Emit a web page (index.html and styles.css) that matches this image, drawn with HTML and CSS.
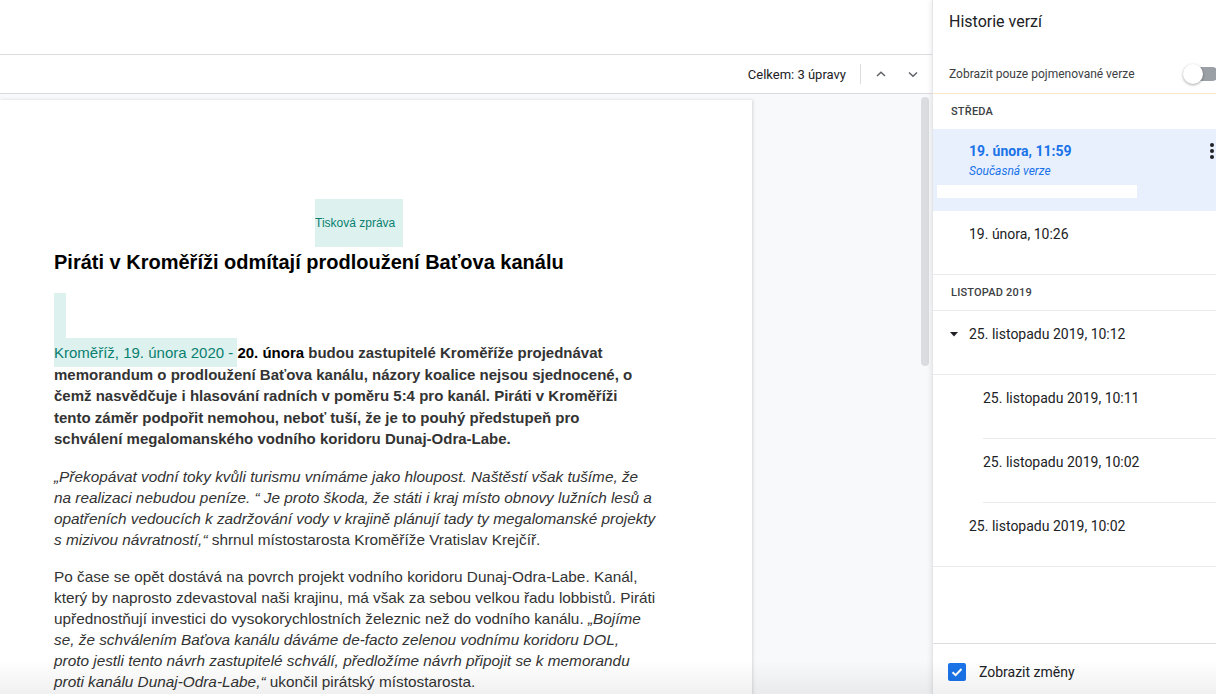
FILE: index.html
```html
<!DOCTYPE html>
<html lang="cs">
<head>
<meta charset="utf-8">
<title>Historie verzí</title>
<link rel="stylesheet" href="styles.css">
</head>
<body>
<div class="app">
  <div class="main">
    <div class="topbar"></div>
    <div class="toolbar">
      <span class="total">Celkem: 3 úpravy</span>
      <span class="divider"></span>
      <button class="nav" aria-label="Předchozí">
        <svg width="12" height="12" viewBox="0 0 12 12"><path d="M2 8 L6 4.2 L10 8" fill="none" stroke="#5f6368" stroke-width="1.5"/></svg>
      </button>
      <button class="nav" aria-label="Další">
        <svg width="12" height="12" viewBox="0 0 12 12"><path d="M2 4.5 L6 8.3 L10 4.5" fill="none" stroke="#5f6368" stroke-width="1.5"/></svg>
      </button>
    </div>
    <div class="canvas">
      <div class="page">
        <div class="tag">Tisková zpráva</div>
        <h1>Piráti v Kroměříži odmítají prodloužení Baťova kanálu</h1>
        <div class="mark"></div>
        <p class="lead"><span class="hl">Kroměříž, 19. února 2020 - </span><span class="black">20. února</span> budou zastupitelé Kroměříže projednávat<br>memorandum o prodloužení Baťova kanálu, názory koalice nejsou sjednocené, o<br>čemž nasvědčuje i hlasování radních v poměru 5:4 pro kanál. Piráti v Kroměříži<br>tento záměr podpořit nemohou, neboť tuší, že je to pouhý předstupeň pro<br>schválení megalomanského vodního koridoru Dunaj-Odra-Labe.</p>
        <p class="para quote"><i>„Překopávat vodní toky kvůli turismu vnímáme jako hloupost. Naštěstí však tušíme, že<br>na realizaci nebudou peníze. “ Je proto škoda, že státi i kraj místo obnovy lužních lesů a<br>opatřeních vedoucích k zadržování vody v krajině plánují tady ty megalomanské projekty<br>s mizivou návratností,“</i> shrnul místostarosta Kroměříže Vratislav Krejčíř.</p>
        <p class="para last">Po čase se opět dostává na povrch projekt vodního koridoru Dunaj-Odra-Labe. Kanál,<br>který by naprosto zdevastoval naši krajinu, má však za sebou velkou řadu lobbistů. Piráti<br>upřednostňují investici do vysokorychlostních železnic než do vodního kanálu. <i>„Bojíme<br>se, že schválením Baťova kanálu dáváme de-facto zelenou vodnímu koridoru DOL,<br>proto jestli tento návrh zastupitelé schválí, předložíme návrh připojit se k memorandu<br>proti kanálu Dunaj-Odra-Labe,“</i> ukončil pirátský místostarosta.</p>
      </div>
      <div class="scrollbar"></div>
    </div>
  </div>

  <aside class="panel">
    <div class="panel-head">Historie verzí</div>
    <div class="toggle-row">
      <span>Zobrazit pouze pojmenované verze</span>
      <span class="switch"><span class="track"></span><span class="knob"></span></span>
    </div>
    <div class="list">
      <div class="section">STŘEDA</div>
      <div class="current">
        <div class="v-head">
          <span class="v-title">19. února, 11:59</span>
          <svg class="more" width="4" height="16" viewBox="0 0 4 16"><circle cx="2" cy="2" r="2"/><circle cx="2" cy="8" r="2"/><circle cx="2" cy="14" r="2"/></svg>
        </div>
        <div class="v-sub">Současná verze</div>
        <div class="v-bar"></div>
      </div>
      <div class="version">19. února, 10:26</div>
      <div class="section divided">LISTOPAD 2019</div>
      <div class="version expand">
        <svg class="caret" width="8" height="5" viewBox="0 0 8 5"><path d="M0 0 H8 L4 4.5 Z" fill="#202124"/></svg>
        <span>25. listopadu 2019, 10:12</span>
      </div>
      <div class="version sub">25. listopadu 2019, 10:11</div>
      <div class="version sub">25. listopadu 2019, 10:02</div>
      <div class="version">25. listopadu 2019, 10:02</div>
    </div>
    <div class="footer">
      <span class="checkbox">
        <svg width="14" height="14" viewBox="0 0 14 14"><path d="M2.5 7.2 L5.6 10.2 L11.5 4" fill="none" stroke="#fff" stroke-width="2"/></svg>
      </span>
      <span>Zobrazit změny</span>
    </div>
  </aside>

  <div class="bottom-fade"></div>
</div>
</body>
</html>
```

FILE: styles.css
```css
body {
  margin: 0;
  font-family: Roboto, "Liberation Sans", Arial, sans-serif;
  background: #fff;
}

.app {
  position: relative;
  display: flex;
  width: 1216px;
  height: 694px;
  overflow: hidden;
  background: #fff;
}

/* ---------- main document area ---------- */
.main {
  width: 932px;
  flex-shrink: 0;
  display: flex;
  flex-direction: column;
}

.topbar {
  height: 54px;
  border-bottom: 1px solid #dadce0;
  flex-shrink: 0;
}

.toolbar {
  height: 38px;
  flex-shrink: 0;
  border-bottom: 1px solid #dadce0;
  display: flex;
  align-items: center;
  justify-content: flex-end;
  padding-right: 3px;
}

.total {
  font-size: 13px;
  color: #202124;
  margin-right: 14px;
}

.divider {
  width: 1px;
  height: 20px;
  background: #dadce0;
  margin-right: 4px;
}

.nav {
  width: 32px;
  height: 32px;
  padding: 0;
  border: 0;
  background: none;
  display: flex;
  align-items: center;
  justify-content: center;
}

.canvas {
  flex: 1;
  position: relative;
  background: #f8f9fa;
  padding-top: 6px;
  overflow: hidden;
}

.page {
  width: 752px;
  min-height: 620px;
  box-sizing: border-box;
  background: #fff;
  box-shadow: 1px 0 3px rgba(60, 64, 67, 0.18);
  padding: 99px 0 0 54px;
  font-family: "Liberation Sans", Arial, sans-serif;
}

.tag {
  width: max-content;
  height: 48px;
  box-sizing: border-box;
  margin-left: 261px;
  padding: 16px 8px 0 0;
  background: #ddf2ef;
  color: #0a7f6f;
  font-size: 12px;
  line-height: 16px;
}

.page h1 {
  margin: 3px 0 0;
  font-size: 20px;
  line-height: 24px;
  font-weight: 700;
  color: #000;
}

.mark {
  width: 12px;
  height: 45px;
  margin-top: 19px;
  background: #ddf2ef;
}

.page p {
  margin: 4px 0 0;
  font-size: 15px;
  line-height: 21.5px;
  color: #333;
  white-space: nowrap;
}

.page p.lead {
  font-weight: 700;
}

.page p.para {
  font-size: 15.35px;
  line-height: 21.1px;
}

.page p.quote {
  margin-top: 16.5px;
}

.page p.last {
  margin-top: 15.8px;
  line-height: 21px;
}

.hl {
  background: #ddf2ef;
  color: #0a7f6f;
  font-weight: 400;
  padding: 6px 0;
}

.black {
  color: #000;
}

.scrollbar {
  position: absolute;
  left: 921px;
  top: 3px;
  width: 8px;
  height: 269px;
  border-radius: 4px;
  background: #dadce0;
}

/* ---------- version history panel ---------- */
.panel {
  position: relative;
  z-index: 1;
  width: 284px;
  flex-shrink: 0;
  box-sizing: border-box;
  border-left: 1px solid #e3e5e8;
  box-shadow: -2px 0 4px rgba(60, 64, 67, 0.08);
  display: flex;
  flex-direction: column;
  overflow: hidden;
  background: #fff;
  color: #202124;
}

.panel-head {
  height: 55px;
  box-sizing: border-box;
  padding: 12px 0 0 16px;
  font-size: 16px;
  line-height: 20px;
  color: #202124;
  flex-shrink: 0;
}

.toggle-row {
  height: 39px;
  box-sizing: border-box;
  flex-shrink: 0;
  border-bottom: 1px solid #fbe3cc;
  display: flex;
  align-items: center;
  padding-left: 16px;
  font-size: 12px;
  color: #3c4043;
}

.switch {
  position: relative;
  margin-left: auto;
  margin-right: -3px;
  width: 36px;
  height: 20px;
  flex-shrink: 0;
}

.track {
  position: absolute;
  left: 5px;
  top: 3px;
  width: 31px;
  height: 14px;
  border-radius: 7px;
  background: #9aa0a6;
}

.knob {
  position: absolute;
  left: 0;
  top: 0;
  width: 20px;
  height: 20px;
  border-radius: 50%;
  background: #fff;
  box-shadow: 0 1px 3px rgba(0, 0, 0, 0.35);
}

.list {
  flex: 1;
  display: flex;
  flex-direction: column;
}

.section {
  height: 35px;
  box-sizing: border-box;
  flex-shrink: 0;
  display: flex;
  align-items: center;
  padding-left: 18px;
  font-size: 11px;
  font-weight: 500;
  letter-spacing: 0.2px;
  color: #3c4043;
}

.section.divided {
  height: 36px;
  border-bottom: 1px solid #e8eaed;
}

.current {
  height: 82px;
  box-sizing: border-box;
  flex-shrink: 0;
  background: #e8f0fe;
  padding: 12px 2px 0 36px;
}

.v-head {
  display: flex;
  align-items: center;
  justify-content: space-between;
}

.v-title {
  font-size: 14px;
  line-height: 20px;
  font-weight: 700;
  color: #1a73e8;
}

.more {
  fill: #202124;
}

.v-sub {
  margin-top: 2px;
  font-size: 12px;
  line-height: 16px;
  font-style: italic;
  color: #1a73e8;
}

.v-bar {
  margin: 6px 0 0 -32px;
  width: 200px;
  height: 13px;
  background: #fff;
}

.version {
  height: 64px;
  box-sizing: border-box;
  flex-shrink: 0;
  border-bottom: 1px solid #e8eaed;
  padding: 13px 0 0 36px;
  font-size: 14px;
  line-height: 20px;
  color: #202124;
}

.version.expand {
  display: flex;
  align-items: flex-start;
  padding-left: 17px;
}

.caret {
  margin: 8px 11px 0 0;
  flex-shrink: 0;
}

.version.sub {
  margin-left: 50px;
  padding-left: 0;
}

.footer {
  flex-shrink: 0;
  height: 51px;
  box-sizing: border-box;
  border-top: 1px solid #dadce0;
  display: flex;
  align-items: center;
  gap: 13px;
  padding: 5px 0 0 15px;
  font-size: 14px;
  color: #202124;
}

.checkbox {
  width: 18px;
  height: 18px;
  border-radius: 2px;
  background: #1a73e8;
  display: flex;
  align-items: center;
  justify-content: center;
}

.bottom-fade {
  position: absolute;
  left: 0;
  right: 0;
  bottom: 0;
  height: 34px;
  z-index: 2;
  pointer-events: none;
  background: linear-gradient(rgba(0, 0, 0, 0), rgba(0, 0, 0, 0.06));
}
```
